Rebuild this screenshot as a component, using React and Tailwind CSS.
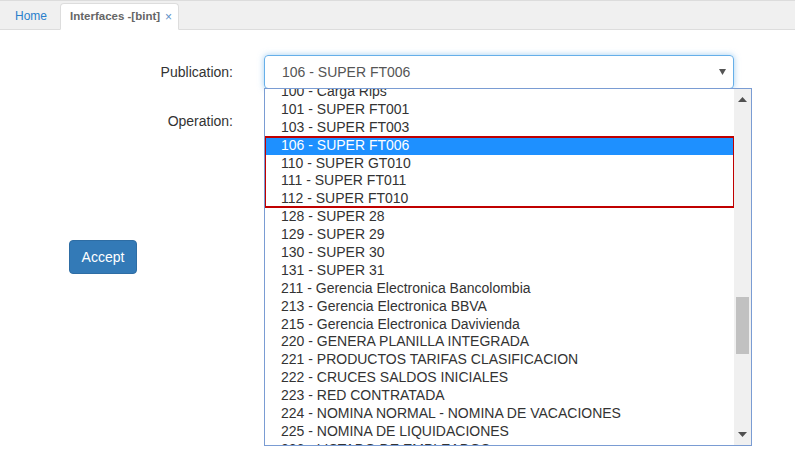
import React from "react";

const items = [
  "100 - Carga Rips",
  "101 - SUPER FT001",
  "103 - SUPER FT003",
  "106 - SUPER FT006",
  "110 - SUPER GT010",
  "111 - SUPER FT011",
  "112 - SUPER FT010",
  "128 - SUPER 28",
  "129 - SUPER 29",
  "130 - SUPER 30",
  "131 - SUPER 31",
  "211 - Gerencia Electronica Bancolombia",
  "213 - Gerencia Electronica BBVA",
  "215 - Gerencia Electronica Davivienda",
  "220 - GENERA PLANILLA INTEGRADA",
  "221 - PRODUCTOS TARIFAS CLASIFICACION",
  "222 - CRUCES SALDOS INICIALES",
  "223 - RED CONTRATADA",
  "224 - NOMINA NORMAL - NOMINA DE VACACIONES",
  "225 - NOMINA DE LIQUIDACIONES",
  "226 - LISTADO DE EMPLEADOS",
];

function Item({ text, selected }) {
  return (
    <div
      className={
        "h-[17.9px] leading-[17.9px] pl-[16px] whitespace-nowrap text-[14px] " +
        (selected ? "bg-[#1e90ff] text-white" : "text-[#333]")
      }
    >
      {text}
    </div>
  );
}

export default function App() {
  return (
    <div className="relative w-[795px] h-[465px] bg-white overflow-hidden font-['Liberation_Sans',Arial,sans-serif]">
      {/* Tab bar */}
      <div className="h-[30px] bg-[#f0f0f0] border-t border-[#dcdcdc] border-b border-b-[#dddddd] flex items-end pl-[5px]">
        <div className="h-[26px] px-[10px] flex items-center text-[12px] text-[#2a7fcc]">Home</div>
        <div className="ml-[3px] h-[27px] -mb-px pl-[9px] pr-[6px] flex items-center gap-[5px] bg-white border border-[#dddddd] border-b-white rounded-t-[4px] text-[11.5px] font-bold text-[#666]">
          <span>Interfaces -[bint]</span>
          <span className="text-[#5b8fc7] font-normal text-[12px]">×</span>
        </div>
      </div>

      {/* Form */}
      <div className="pt-[25px] text-[14px] text-[#333]">
        <div className="flex items-center h-[34px]">
          <div className="w-[233px] text-right">Publication:</div>
          <div className="ml-[31px] w-[470px] h-[34px] border border-[#66afe9] rounded-[4px] shadow-[0_0_6px_rgba(102,175,233,0.6)] flex items-center justify-between pl-[17px] pr-[7px] text-[#555]">
            <span>106 - SUPER FT006</span>
            <svg width="7" height="6" viewBox="0 0 7 6"><path d="M0 0 H7 L3.5 6 Z" fill="#555" /></svg>
          </div>
        </div>
        <div className="flex items-center h-[34px] mt-[15px]">
          <div className="w-[233px] text-right">Operation:</div>
        </div>
        <div className="mt-[102px] pl-[69px]">
          <button className="w-[68px] h-[34px] rounded-[4px] bg-[#337ab7] border border-[#2e6da4] text-white text-[14px]">
            Accept
          </button>
        </div>
      </div>

      {/* Dropdown list popup */}
      <div className="absolute left-[264px] top-[88px] w-[488px] h-[358px] border border-[#7a9cd3] bg-white flex">
        <div className="relative flex-1 overflow-hidden">
          <div className="-mt-[6px]">
            {items.map((t, i) => (
              <Item key={t} text={t} selected={i === 3} />
            ))}
          </div>
          {/* red highlight frame over items 106-112 */}
          <div className="absolute -left-px top-[47px] w-[471px] h-[72px] border-2 border-[#c00000]" />
        </div>
        <div className="w-[17px] bg-[#f0f0f0] flex flex-col items-center justify-between py-[8px] relative">
          <svg width="9" height="5" viewBox="0 0 9 5"><path d="M0 5 L4.5 0 L9 5 Z" fill="#505050" /></svg>
          <div className="absolute left-[2px] top-[208px] w-[13px] h-[57px] bg-[#c1c1c1]" />
          <svg width="9" height="5" viewBox="0 0 9 5"><path d="M0 0 L9 0 L4.5 5 Z" fill="#505050" /></svg>
        </div>
      </div>
    </div>
  );
}
